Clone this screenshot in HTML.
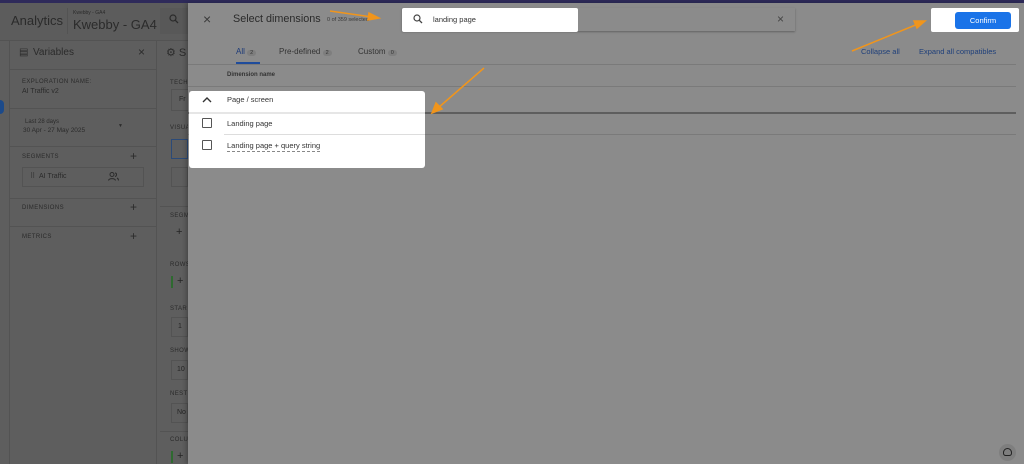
<!DOCTYPE html>
<html><head><meta charset="utf-8"><style>
*{margin:0;padding:0;box-sizing:border-box}
body{width:1024px;height:464px;overflow:hidden;background:#5e5e5e;font-family:"Liberation Sans",sans-serif;position:relative;color:#252525}
.a{position:absolute;white-space:nowrap}
.hl{position:absolute;height:1px;background:#535353}
.vl{position:absolute;width:1px;background:#535353}
.sm{font-size:6px;letter-spacing:.4px;color:#2a2a2a}
</style></head><body>
<div class="a" style="left:0;top:0;width:1024px;height:3px;background:#2e2a5a"></div>
<div class="a" style="left:0;top:3px;width:188px;height:37px;background:#5c5c5c"></div>
<div class="a" style="left:11px;top:13px;font-size:13px;color:#2b2b2b">Analytics</div>
<div class="vl" style="left:67px;top:8px;height:26px"></div>
<div class="a" style="left:73px;top:10px;font-size:5px;color:#2b2b2b">Kwebby - GA4</div>
<div class="a" style="left:73px;top:17px;font-size:13px;color:#2b2b2b">Kwebby - GA4</div>
<div class="a" style="left:160px;top:8px;width:28px;height:26px;background:#585858"></div>
<svg class="a" style="left:169px;top:14px" width="10" height="10" viewBox="0 0 10 10"><circle cx="4" cy="4" r="3" fill="none" stroke="#2b2b2b" stroke-width="1.2"/><path d="M6.2 6.2L9 9" stroke="#2b2b2b" stroke-width="1.3"/></svg>
<div class="hl" style="left:0;top:40px;width:188px"></div>
<div class="vl" style="left:9px;top:40px;height:424px"></div>
<div class="vl" style="left:156px;top:40px;height:424px"></div>
<div class="a" style="left:0;top:100px;width:4px;height:14px;background:#1c4a8a;border-radius:0 7px 7px 0"></div>
<div class="a" style="left:19px;top:47px;font-size:10px;color:#2b2b2b">&#9636;</div>
<div class="a" style="left:33px;top:47px;font-size:10px;color:#2b2b2b">Variables</div>
<div class="a" style="left:138px;top:45px;font-size:12px;color:#2b2b2b">×</div>
<div class="hl" style="left:9px;top:69px;width:147px"></div>
<div class="a sm" style="left:22px;top:79px">EXPLORATION NAME:</div>
<div class="a" style="left:22px;top:88px;font-size:7px;color:#2b2b2b">AI Traffic v2</div>
<div class="hl" style="left:9px;top:108px;width:147px"></div>
<div class="a" style="left:25px;top:119px;font-size:6px;color:#2b2b2b">Last 28 days</div>
<div class="a" style="left:23px;top:127px;font-size:6.5px;color:#2b2b2b">30 Apr - 27 May 2025</div>
<div class="a" style="left:118px;top:123px;font-size:5px;color:#2b2b2b">▼</div>
<div class="hl" style="left:9px;top:146px;width:147px"></div>
<div class="a sm" style="left:22px;top:154px">SEGMENTS</div>
<div class="a" style="left:130px;top:149px;font-size:12px;color:#2b2b2b">+</div>
<div class="a" style="left:22px;top:167px;width:122px;height:20px;border:1px solid #535353"></div>
<div class="a" style="left:30px;top:172px;font-size:7px;color:#2b2b2b">⠿ &nbsp;AI Traffic</div>
<svg class="a" style="left:108px;top:172px" width="11" height="9" viewBox="0 0 11 9"><circle cx="4" cy="2.5" r="2" fill="none" stroke="#2b2b2b"/><path d="M0.5 8.5C1 6 7 6 7.5 8.5M7 1C9 1 9 4 7 4.5M9 6C10 6.5 10.5 7.5 10.5 8.5" fill="none" stroke="#2b2b2b"/></svg>
<div class="hl" style="left:9px;top:198px;width:147px"></div>
<div class="a sm" style="left:22px;top:205px">DIMENSIONS</div>
<div class="a" style="left:130px;top:200px;font-size:12px;color:#2b2b2b">+</div>
<div class="hl" style="left:9px;top:226px;width:147px"></div>
<div class="a sm" style="left:22px;top:234px">METRICS</div>
<div class="a" style="left:130px;top:229px;font-size:12px;color:#2b2b2b">+</div>
<div class="a" style="left:166px;top:46px;font-size:11px;color:#2b2b2b">⚙ S</div>
<div class="a sm" style="left:170px;top:80px">TECH</div>
<div class="a" style="left:171px;top:89px;width:17px;height:22px;border:1px solid #535353;border-right:0;font-size:7px;padding:6px 0 0 7px">Fr</div>
<div class="a sm" style="left:170px;top:125px">VISUA</div>
<div class="a" style="left:171px;top:139px;width:17px;height:20px;border:1px solid #2b4a78"></div>
<div class="a" style="left:171px;top:167px;width:17px;height:20px;border:1px solid #535353"></div>
<div class="hl" style="left:160px;top:206px;width:28px"></div>
<div class="a sm" style="left:170px;top:213px">SEGM</div>
<div class="a" style="left:176px;top:226px;font-size:11px">+</div>
<div class="a sm" style="left:170px;top:262px">ROWS</div>
<div class="a" style="left:171px;top:276px;width:2px;height:12px;border-left:2px dashed #2e6a30"></div>
<div class="a" style="left:177px;top:275px;font-size:11px">+</div>
<div class="a sm" style="left:170px;top:306px">STAR</div>
<div class="a" style="left:171px;top:317px;width:17px;height:20px;border:1px solid #535353;font-size:7px;padding:5px 0 0 6px">1</div>
<div class="a sm" style="left:170px;top:348px">SHOW</div>
<div class="a" style="left:171px;top:360px;width:17px;height:20px;border:1px solid #535353;font-size:7px;padding:5px 0 0 5px">10</div>
<div class="a sm" style="left:170px;top:391px">NEST</div>
<div class="a" style="left:171px;top:403px;width:17px;height:20px;border:1px solid #535353;font-size:7px;padding:5px 0 0 5px">No</div>
<div class="hl" style="left:160px;top:431px;width:28px"></div>
<div class="a sm" style="left:170px;top:437px">COLU</div>
<div class="a" style="left:171px;top:451px;width:2px;height:12px;border-left:2px dashed #2e6a30"></div>
<div class="a" style="left:177px;top:450px;font-size:11px">+</div>

<div class="a" style="left:188px;top:3px;width:836px;height:461px;background:#8b8b8b;box-shadow:-2px 0 4px rgba(0,0,0,.25)"></div>
<div class="a" style="left:203px;top:11px;font-size:14px;color:#3a3a3a">×</div>
<div class="a" style="left:233px;top:13px;font-size:10.8px;color:#2a2a2a">Select dimensions</div>
<div class="a" style="left:327px;top:17px;font-size:5.5px;color:#3a3a3a">0 of 359 selected</div>
<div class="a" style="left:402px;top:8px;width:393px;height:23px;background:#8b8b8b;box-shadow:0 1px 2px rgba(0,0,0,.3)"></div>
<div class="a" style="left:402px;top:8px;width:176px;height:24px;background:#fff;border-radius:2px"></div>
<svg class="a" style="left:413px;top:14px" width="10" height="10" viewBox="0 0 10 10"><circle cx="4" cy="4" r="3" fill="none" stroke="#444" stroke-width="1.2"/><path d="M6.2 6.2L9 9" stroke="#444" stroke-width="1.3"/></svg>
<div class="a" style="left:433px;top:15px;font-size:7.5px;color:#333">landing page</div>
<div class="a" style="left:777px;top:12px;font-size:12px;color:#444">×</div>
<div class="a" style="left:931px;top:8px;width:88px;height:24px;background:#fff;border-radius:2px"></div>
<div class="a" style="left:955px;top:12px;width:56px;height:17px;background:#1a73e8;border-radius:3px;color:#fff;font-size:7.5px;text-align:center;line-height:17px">Confirm</div>
<div class="a" style="left:236px;top:47px;font-size:8px;color:#1c3a78">All <span style="background:#7e7e7e;border-radius:5px;padding:0 3px;font-size:5.5px;color:#333">2</span></div>
<div class="a" style="left:236px;top:62px;width:24px;height:2px;background:#1f4c9c"></div>
<div class="a" style="left:279px;top:47px;font-size:8px;color:#333">Pre-defined <span style="background:#7e7e7e;border-radius:5px;padding:0 3px;font-size:5.5px">2</span></div>
<div class="a" style="left:358px;top:47px;font-size:8px;color:#333">Custom <span style="background:#7e7e7e;border-radius:5px;padding:0 3px;font-size:5.5px">0</span></div>
<div class="a" style="left:861px;top:47px;font-size:7.5px;color:#1e3f7a">Collapse all</div>
<div class="a" style="left:919px;top:47px;font-size:7.5px;color:#1e3f7a">Expand all compatibles</div>
<div class="hl" style="left:188px;top:64px;width:828px;background:#7a7a7a"></div>
<div class="a" style="left:227px;top:72px;font-size:6px;font-weight:bold;color:#333">Dimension name</div>
<div class="hl" style="left:188px;top:86px;width:828px;background:#7a7a7a"></div>
<div class="hl" style="left:188px;top:112px;width:828px;height:2px;background:#5e5e5e"></div>
<div class="hl" style="left:188px;top:134px;width:828px;background:#7a7a7a"></div>
<div class="a" style="left:189px;top:91px;width:236px;height:77px;background:#fff;border-radius:3px"></div>
<div class="a" style="left:189px;top:112px;width:236px;height:2px;background:#e6e6e6"></div>
<svg class="a" style="left:201px;top:95px" width="12" height="10" viewBox="0 0 12 10"><path d="M2 7L6 3L10 7" fill="none" stroke="#333" stroke-width="1.4"/></svg>
<div class="a" style="left:227px;top:95px;font-size:7.5px;color:#333">Page / screen</div>
<div class="a" style="left:202px;top:118px;width:10px;height:10px;border:1.3px solid #555;border-radius:1px"></div>
<div class="a" style="left:227px;top:119px;font-size:7.5px;color:#333">Landing page</div>
<div class="a" style="left:224px;top:134px;width:201px;height:1px;background:#ddd"></div>
<div class="a" style="left:202px;top:140px;width:10px;height:10px;border:1.3px solid #555;border-radius:1px"></div>
<div class="a" style="left:227px;top:141px;font-size:7.5px;color:#333;border-bottom:1px dashed #888;line-height:10px">Landing page + query string</div>
<svg class="a" style="left:0;top:0" width="1024" height="464">
<g stroke="#f0951c" stroke-width="1.5" fill="#f0951c">
<path d="M330 11L372 17" fill="none"/><path d="M379 18L369 13L368 20Z"/>
<path d="M484 68L438 108" fill="none"/><path d="M432 113L436 103L442 109Z"/>
<path d="M852 51L918 24" fill="none"/><path d="M925 21L914 21L917 28Z"/>
</g></svg>
<div class="a" style="left:999px;top:444px;width:17px;height:17px;border-radius:50%;background:#7e7e7e"></div>
<div class="a" style="left:1003px;top:448px;width:9px;height:8px;border:1.3px solid #222;border-radius:5px 5px 3px 3px"></div>
</body></html>
